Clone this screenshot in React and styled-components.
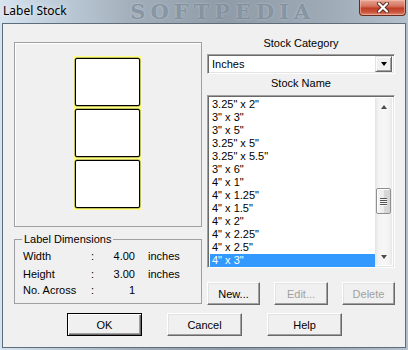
import React from 'react';
import styled, { createGlobalStyle } from 'styled-components';

const GlobalStyle = createGlobalStyle`
  html, body {
    margin: 0;
    padding: 0;
    background: #9fb0c0;
  }
  body {
    width: 408px;
    height: 350px;
    overflow: hidden;
  }
`;

const Window = styled.div`
  width: 408px;
  height: 350px;
  box-sizing: border-box;
  display: flex;
  flex-direction: column;
  padding: 0 2px 2px 2px;
  background: linear-gradient(90deg, #d8e4f0 0%, #c4d2e0 10%, #a3b0bc 32%, #8f9ca8 55%, #9eaab6 80%, #b4c0cc 100%);
`;

const TitleBar = styled.div`
  height: 23px;
  display: flex;
  align-items: flex-start;
`;

const Title = styled.div`
  padding: 3px 0 0 1px;
  font-family: "Noto Sans", "Liberation Sans", sans-serif;
  font-size: 12px;
  line-height: 15px;
  color: #000;
  text-shadow: 0 0 6px rgba(255, 255, 255, 0.9);
`;

const Watermark = styled.div`
  flex: 1;
  text-align: center;
  font-family: "DejaVu Serif", "Liberation Serif", serif;
  font-weight: bold;
  font-size: 21px;
  line-height: 23px;
  letter-spacing: 5px;
  color: rgba(112, 126, 140, 0.7);
  text-shadow: 0 0 2px rgba(220, 230, 240, 0.6);
  padding-left: 20px;
`;

const CloseButton = styled.div`
  width: 47px;
  height: 16px;
  box-sizing: border-box;
  border: 1px solid #6a2c20;
  border-top: none;
  border-radius: 0 0 4px 4px;
  background: linear-gradient(180deg, #e6a595 0%, #d77561 40%, #c03f26 55%, #c9553c 80%, #dd8a70 100%);
  box-shadow: inset 0 0 0 1px rgba(255, 200, 185, 0.5);
  display: flex;
  align-items: center;
  justify-content: center;
`;

const Client = styled.div`
  flex: 1;
  background: #f0f0f0;
  border: 1px solid #5d6d7c;
  padding: 13px 10px 10px 11px;
  display: flex;
  flex-direction: column;
  font-family: "Liberation Sans", Arial, sans-serif;
  font-size: 11px;
  color: #000;
`;

const Main = styled.div`
  display: grid;
  grid-template-columns: 188px 188px;
  column-gap: 5px;
  align-items: start;
`;

const LeftColumn = styled.div`
  padding-top: 5px;
  display: flex;
  flex-direction: column;
`;

const RightColumn = styled.div`
  display: flex;
  flex-direction: column;
`;

const Preview = styled.div`
  height: 185px;
  box-sizing: border-box;
  border: 1px solid #a0a0a0;
  box-shadow: inset 1px 1px 0 #fff;
  display: flex;
  align-items: center;
  justify-content: center;
  padding-bottom: 4px;
`;

const Sheet = styled.div`
  background: #ffff80;
  padding: 2px 2px 2px 1px;
  display: flex;
  flex-direction: column;
  gap: 3px;
`;

const Label = styled.div`
  width: 65px;
  height: 48px;
  box-sizing: border-box;
  background: #fff;
  border: 1px solid #000;
  border-radius: 2px;
  box-shadow: 0 0 0 0.5px rgba(0, 0, 0, 0.5);
`;

const Group = styled.fieldset`
  margin: 6px 0 0 0;
  height: 71px;
  box-sizing: border-box;
  border: 1px solid #a0a0a0;
  padding: 4px 8px 0 8px;
`;

const Legend = styled.legend`
  padding: 0 2px;
  margin-left: -1px;
  line-height: 13px;
`;

const DimGrid = styled.div`
  display: grid;
  grid-template-columns: 68px 10px 34px 1fr;
  grid-template-rows: 18px 16px 14px;
  line-height: 13px;
`;

const DimLabel = styled.span``;

const DimValue = styled.span`
  text-align: right;
  padding-right: ${p => p.$shift || 0}px;
`;

const DimUnit = styled.span`
  padding-left: 13px;
`;

const Heading = styled.div`
  text-align: center;
  line-height: 13px;
  margin-top: ${p => p.$top || 0}px;
`;

const Sunken = styled.div`
  box-sizing: border-box;
  background: #fff;
  border: 1px solid;
  border-color: #a0a0a0 #fff #fff #a0a0a0;
  box-shadow: inset 1px 1px 0 #696969, inset -1px -1px 0 #e3e3e3;
`;

const Combo = styled(Sunken)`
  margin-top: 4px;
  height: 20px;
  display: flex;
  align-items: center;
  padding: 2px;
`;

const ComboText = styled.span`
  flex: 1;
  padding-left: 2px;
`;

const ComboButton = styled.div`
  width: 17px;
  height: 16px;
  box-sizing: border-box;
  background: #f0f0f0;
  border: 1px solid;
  border-color: #e3e3e3 #696969 #696969 #e3e3e3;
  box-shadow: inset 1px 1px 0 #fff, inset -1px -1px 0 #a0a0a0;
  display: flex;
  align-items: center;
  justify-content: center;
`;

const ArrowDown = styled.div`
  width: 0;
  height: 0;
  border-left: 3.5px solid transparent;
  border-right: 3.5px solid transparent;
  border-top: 4px solid ${p => p.$color || '#000'};
`;

const ArrowUp = styled.div`
  width: 0;
  height: 0;
  border-left: 3.5px solid transparent;
  border-right: 3.5px solid transparent;
  border-bottom: 4px solid ${p => p.$color || '#000'};
`;

const ListBox = styled(Sunken)`
  margin-top: 5px;
  height: 173px;
  padding: 2px;
  display: flex;
`;

const Items = styled.div`
  flex: 1;
  display: flex;
  flex-direction: column;
`;

const Item = styled.div`
  height: 13px;
  line-height: 13px;
  padding-left: 2px;
  white-space: pre;
  background: ${p => (p.$selected ? '#3399ff' : 'transparent')};
  color: ${p => (p.$selected ? '#fff' : '#000')};
`;

const ScrollBar = styled.div`
  width: 17px;
  display: flex;
  flex-direction: column;
  background: linear-gradient(90deg, #e3e3e3 0%, #f3f3f3 20%, #f7f7f7 50%, #f3f3f3 80%, #e8e8e8 100%);
`;

const ScrollArrow = styled.div`
  height: 17px;
  display: flex;
  align-items: center;
  justify-content: center;
`;

const Track = styled.div`
  flex: 1;
  display: flex;
  flex-direction: column;
  align-items: center;
`;

const Thumb = styled.div`
  width: 15px;
  height: 26px;
  box-sizing: border-box;
  border: 1px solid #8f8f8f;
  border-radius: 2px;
  background: linear-gradient(90deg, #f4f4f4 0%, #ececec 50%, #d9d9d9 51%, #d4d4d4 100%);
  box-shadow: inset 1px 1px 0 #fff;
  display: flex;
  flex-direction: column;
  align-items: center;
  justify-content: center;
  gap: 1px;
`;

const Grip = styled.div`
  width: 7px;
  height: 1px;
  background: #555;
  box-shadow: 0 1px 0 #f6f6f6;
`;

const ButtonRow = styled.div`
  display: flex;
  justify-content: ${p => p.$center ? 'center' : 'space-between'};
  gap: ${p => p.$gap || 0}px;
  margin-top: ${p => p.$top || 0}px;
`;

const Button = styled.button`
  width: ${p => p.$w}px;
  height: 23px;
  box-sizing: border-box;
  padding: 0;
  font-family: "Liberation Sans", Arial, sans-serif;
  font-size: 11px;
  background: #f0f0f0;
  color: ${p => (p.disabled ? '#a0a0a0' : '#000')};
  border: 1px solid;
  border-color: ${p => (p.$default ? '#000' : '#fff #696969 #696969 #fff')};
  box-shadow: ${p =>
    p.$default
      ? 'inset 1px 1px 0 #fff, inset -1px -1px 0 #696969, inset -2px -2px 0 #a0a0a0'
      : 'inset -1px -1px 0 #a0a0a0, inset 1px 1px 0 #e3e3e3'};
`;

const stockNames = [
  '3.25" x 2"',
  '3" x 3"',
  '3" x 5"',
  '3.25" x 5"',
  '3.25" x 5.5"',
  '3" x 6"',
  '4" x 1"',
  '4" x 1.25"',
  '4" x 1.5"',
  '4" x 2"',
  '4" x 2.25"',
  '4" x 2.5"',
  '4" x 3"',
];

const dimensions = [
  { name: 'Width', value: '4.00', unit: 'inches' },
  { name: 'Height', value: '3.00', unit: 'inches' },
  { name: 'No. Across', value: '1', unit: '', shift: -4 },
];

const App = () => {
  return (
    <>
      <GlobalStyle />
      <Window>
        <TitleBar>
          <Title>Label Stock</Title>
          <Watermark>SOFTPEDIA</Watermark>
          <CloseButton>
            <svg width="14" height="11" viewBox="0 0 14 11">
              <path d="M3 1.5 L11 9.5 M11 1.5 L3 9.5" stroke="#5a2a22" strokeWidth="4" strokeLinecap="round" />
              <path d="M3 1.5 L11 9.5 M11 1.5 L3 9.5" stroke="#fff" strokeWidth="2.2" strokeLinecap="round" />
            </svg>
          </CloseButton>
        </TitleBar>
        <Client>
          <Main>
            <LeftColumn>
              <Preview>
                <Sheet>
                  <Label />
                  <Label />
                  <Label />
                </Sheet>
              </Preview>
              <Group>
                <Legend>Label Dimensions</Legend>
                <DimGrid>
                  {dimensions.map(d => (
                    <React.Fragment key={d.name}>
                      <DimLabel>{d.name}</DimLabel>
                      <span>:</span>
                      <DimValue $shift={d.shift}>{d.value}</DimValue>
                      <DimUnit>{d.unit}</DimUnit>
                    </React.Fragment>
                  ))}
                </DimGrid>
              </Group>
            </LeftColumn>
            <RightColumn>
              <Heading>Stock Category</Heading>
              <Combo>
                <ComboText>Inches</ComboText>
                <ComboButton>
                  <ArrowDown />
                </ComboButton>
              </Combo>
              <Heading $top={3}>Stock Name</Heading>
              <ListBox>
                <Items>
                  {stockNames.map((s, i) => (
                    <Item key={s} $selected={i === stockNames.length - 1}>{s}</Item>
                  ))}
                </Items>
                <ScrollBar>
                  <ScrollArrow>
                    <ArrowUp $color="#4d4d4d" />
                  </ScrollArrow>
                  <Track>
                    <Thumb style={{ marginTop: 73 }}>
                      <Grip />
                      <Grip />
                      <Grip />
                      <Grip />
                    </Thumb>
                  </Track>
                  <ScrollArrow>
                    <ArrowDown $color="#4d4d4d" />
                  </ScrollArrow>
                </ScrollBar>
              </ListBox>
              <ButtonRow $top={14}>
                <Button $w={53}>New...</Button>
                <Button $w={54} disabled>Edit...</Button>
                <Button $w={53} disabled>Delete</Button>
              </ButtonRow>
            </RightColumn>
          </Main>
          <ButtonRow $center $gap={25} $top={8}>
            <Button $w={75} $default>OK</Button>
            <Button $w={75}>Cancel</Button>
            <Button $w={75}>Help</Button>
          </ButtonRow>
        </Client>
      </Window>
    </>
  );
};

export default App;
